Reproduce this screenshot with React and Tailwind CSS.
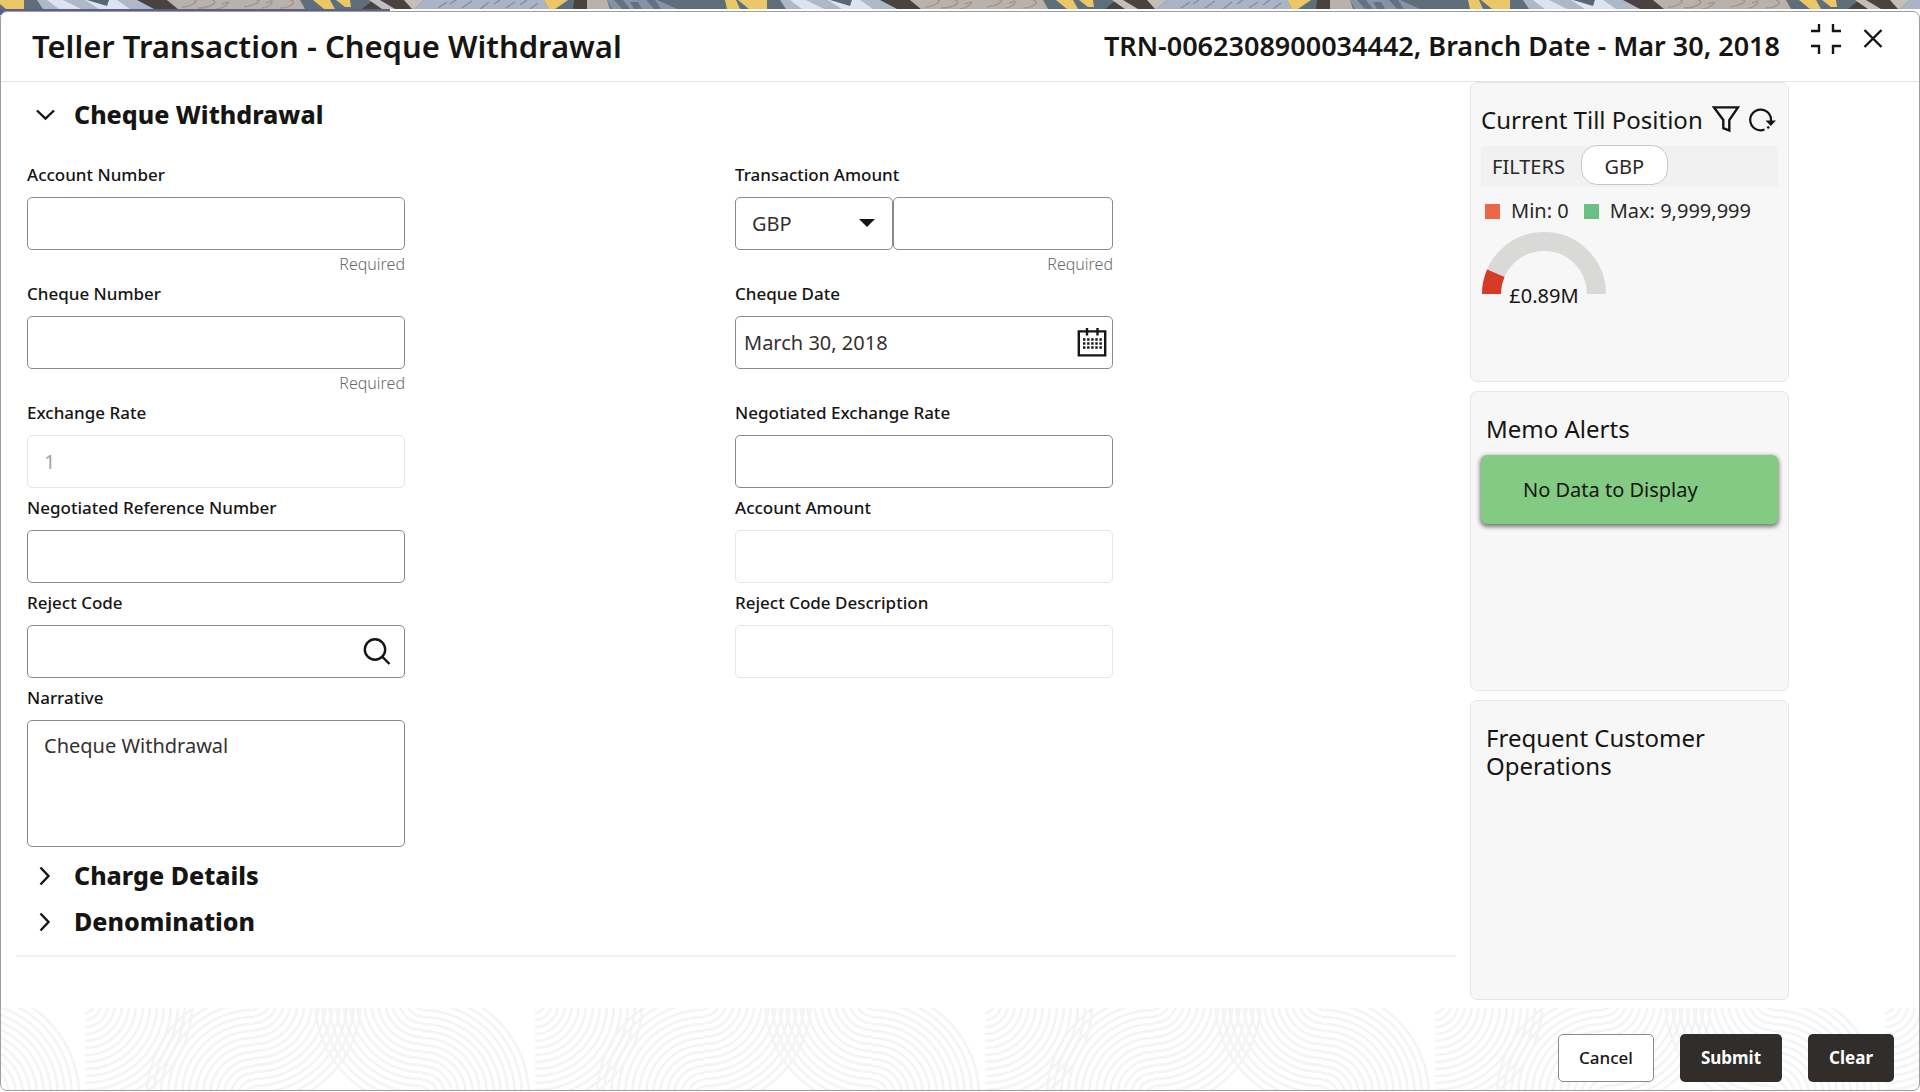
import React, { useId, useState } from 'react';

const cx = (...names) => names.filter(Boolean).join(' ');

/* ---------- decoration ---------- */

const BannerArt = () => (
  <svg className="block h-[9px] w-full" aria-hidden="true">
    <defs>
      <pattern id="banner" x="-18" y="0" width="743" height="9" patternUnits="userSpaceOnUse">
        <rect width="743" height="9" fill="#5f6f7a" />
        <path d="M0 0H11L15 9H2ZM13 0H42V9H24Z" fill="#ecc768" />
        <path d="M55 0H160L176 9H61Z" fill="#aeb8c7" />
        <path d="M65 0H81L99 9H77ZM103 0H135L148 9H117Z" fill="#dce3f1" />
        <path d="M105 0H127L125 6Z" fill="#566874" />
        <path d="M155 0H185L196 9H172Z" fill="#484240" />
        <path d="M185 0H318L323 9H196Z" fill="#b9b1ab" />
        <path
          d="M200 7c10 0 18-7 12-7M216 8c12 0 22-6 14-8M240 4c14-6 2 5-6 5M262 7c10-1 20-7 12-7M284 3c12-6 4 5-4 5M298 8c10 0 18-6 10-8"
          fill="none"
          stroke="#a0988f"
          strokeWidth="1.5"
        />
        <path d="M331 0H348L353 9H342ZM354 0H368L369 7H363Z" fill="#ecc768" />
        <path d="M391 0H424L433 9H380Z" fill="#484240" />
        <path d="M387 0H398L413 9H400ZM422 0H442L432 9H430Z" fill="#c3beba" />
        <path d="M442 0H562L567 9H432Z" fill="#aab4c4" />
        <path
          d="M456 8l9-6M468 4l6-4M480 8l10-7M498 9l9-7M512 4l6-4M524 8l9-6M538 5l7-5M548 9l8-6"
          stroke="#8090a2"
          strokeWidth="1.5"
        />
        <path d="M562 0H586L573 9H567Z" fill="#ecc768" />
        <path d="M592 0H605V9H591Z" fill="#484240" />
        <path d="M605 0H625L628 9H605Z" fill="#b9b1ab" />
        <path d="M625 0H675L695 9H630Z" fill="#8792a7" />
        <path d="M632 0h9l7 9h-8ZM648 2h8l4 7h-8ZM664 0h9l6 9h-7Z" fill="#63727f" />
      </pattern>
    </defs>
    <rect width="100%" height="9" fill="url(#banner)" />
  </svg>
);

const ringSteps = [2, 9, 16, 23, 30, 37, 44, 51, 58, 65, 72, 79, 86, 93, 100, 107];

const Rings = ({ x, y, clip }) => (
  <g clipPath={`url(#${clip})`}>
    {ringSteps.map((r) => (
      <circle key={r} cx={x} cy={y} r={r} />
    ))}
  </g>
);

const FooterArt = () => (
  <svg className="pointer-events-none absolute inset-0 h-full w-full" aria-hidden="true">
    <defs>
      <clipPath id="artA"><rect x="0" y="0" width="169" height="90" /></clipPath>
      <clipPath id="artB"><rect x="169" y="0" width="168" height="90" /></clipPath>
      <clipPath id="artC"><rect x="337" y="0" width="113" height="90" /></clipPath>
      <pattern id="footerArt" x="84" y="0" width="450" height="90" patternUnits="userSpaceOnUse">
        <g fill="none" stroke="#f4f4f4" strokeWidth="2.6">
          <Rings x={0} y={-4} clip="artA" />
          <Rings x={169} y={88} clip="artA" />
          <Rings x={169} y={-8} clip="artB" />
          <Rings x={337} y={-8} clip="artB" />
          <Rings x={337} y={88} clip="artC" />
        </g>
      </pattern>
    </defs>
    <rect width="100%" height="100%" fill="url(#footerArt)" />
  </svg>
);

/* ---------- icons ---------- */

const Chevron = ({ open }) => (
  <svg className="h-5 w-5" viewBox="0 0 20 20" fill="none" stroke="currentColor" strokeWidth="2.4" aria-hidden="true">
    <path d={open ? 'M2 5.5L10.5 13.5L19 5.5' : 'M5.5 1.5L13.5 10L5.5 18.5'} />
  </svg>
);

const CollapseIcon = () => (
  <svg className="h-[30px] w-[30px]" viewBox="0 0 30 30" fill="none" stroke="currentColor" strokeWidth="2.4" aria-hidden="true">
    <path d="M0 7H8V0M22 0V7H30M0 22H8V30M22 30V22H30" />
  </svg>
);

const CloseIcon = () => (
  <svg className="h-5 w-5" viewBox="0 0 20 20" fill="none" stroke="currentColor" strokeWidth="2.4" aria-hidden="true">
    <path d="M1.5 1L18.5 18M18.5 1L1.5 18" />
  </svg>
);

const FunnelIcon = () => (
  <svg className="h-7 w-7" viewBox="0 0 28 28" fill="none" stroke="currentColor" strokeWidth="2.4" aria-hidden="true">
    <path d="M2 1.4H26L17.3 14V24.6L11.3 22.2V14Z" />
  </svg>
);

const RefreshIcon = () => (
  <svg className="h-7 w-7" viewBox="0 0 28 28" fill="none" stroke="currentColor" strokeWidth="2.2" aria-hidden="true">
    <path d="M16.5 23.6A10.4 10.4 0 1 1 22.9 15.5" />
    <path d="M17.6 14.6H28L22.8 20Z" fill="currentColor" stroke="none" />
    <path d="M19.4 22.2L21 20.6" />
  </svg>
);

const SearchIcon = () => (
  <svg className="h-7 w-7" viewBox="0 0 28 28" fill="none" stroke="currentColor" strokeWidth="2.4" aria-hidden="true">
    <circle cx="12" cy="11.5" r="10.2" />
    <path d="M19.2 18.7L26.5 26" />
  </svg>
);

const CalendarIcon = () => (
  <svg className="h-[30px] w-[30px]" viewBox="0 0 30 30" aria-hidden="true">
    <path d="M1.8 3.4H28.2V27.4H1.8ZM10 0V7.5M20.5 0V7.5" fill="none" stroke="currentColor" strokeWidth="2.4" />
    {[11.5, 15.5, 19.5].map((y) => (
      <path key={y} d={`M6 ${y}H25`} stroke="currentColor" strokeWidth="2.4" strokeDasharray="2.4 1.7" />
    ))}
  </svg>
);

/* ---------- form pieces ---------- */

const boxClass =
  'block h-[53px] w-full rounded-[5px] border border-[#8b8a88] bg-white text-[20px] text-[#33312f] outline-none focus:border-[#161513] disabled:border-[#e6e6e5] disabled:text-[#a5a4a2]';

const Field = ({ label, required, reserve, children }) => {
  const id = useId();
  return (
    <div className={cx('w-full max-w-[378px]', required || reserve ? 'min-h-[119px]' : 'min-h-[95px]')}>
      <label htmlFor={id} className="mb-[10px] block text-[17px] leading-6 font-medium">
        {label}
      </label>
      {children(id)}
      {required && <p className="mt-[2px] text-right text-[16px] leading-6 font-light text-[#6b6967]">Required</p>}
    </div>
  );
};

const TextField = ({ label, required, reserve, icon, iconLabel, padding = 'px-4', ...rest }) => (
  <Field label={label} required={required} reserve={reserve}>
    {(id) => (
      <div className="relative">
        <input id={id} type="text" className={cx(boxClass, padding)} {...rest} />
        {icon && (
          <button type="button" aria-label={iconLabel} className="absolute inset-y-0 right-0 flex items-center pr-[6px]">
            {icon}
          </button>
        )}
      </div>
    )}
  </Field>
);

const SectionHeading = ({ title, open }) => (
  <h2>
    <button type="button" aria-expanded={open} className="flex h-[46px] items-center gap-[19px] pl-2 text-[25px] font-extrabold">
      <Chevron open={open} />
      {title}
    </button>
  </h2>
);

/* ---------- side widgets ---------- */

const Card = ({ children }) => (
  <section className="min-h-[300px] rounded-[7px] border border-[#e6e6e6] bg-[#f7f7f7] px-[10px] pt-[23px]">{children}</section>
);

const cardTitle = 'text-[24px] leading-7 font-normal';

const Gauge = ({ value, share }) => {
  const angle = Math.PI * (1 - share);
  const arcX = 63 + 52.5 * Math.cos(angle);
  const arcY = 62 - 52.5 * Math.sin(angle);
  return (
    <svg className="mt-[6px] h-[78px] w-[126px]" viewBox="0 0 126 78" role="img" aria-label={`Till position ${value}`}>
      <path d="M10.5 62A52.5 52.5 0 0 1 115.5 62" fill="none" stroke="#d9d9d7" strokeWidth="19" />
      <path d={`M10.5 62A52.5 52.5 0 0 1 ${arcX} ${arcY}`} fill="none" stroke="#d63b25" strokeWidth="19" />
      <text x="63" y="71" textAnchor="middle" fontSize="20" fill="#161513">
        {value}
      </text>
    </svg>
  );
};

const TillPosition = () => (
  <Card>
    <div className="flex items-center justify-between pr-[2px]">
      <h3 className={cardTitle}>Current Till Position</h3>
      <div className="flex gap-2">
        <button type="button" aria-label="Filter"><FunnelIcon /></button>
        <button type="button" aria-label="Refresh"><RefreshIcon /></button>
      </div>
    </div>
    <div className="mt-3 flex h-[41px] items-center gap-4 bg-[#f1f1f1] pl-[11px] text-[20px] text-[#2a2826]">
      <span>FILTERS</span>
      <button type="button" className="mb-1 h-10 w-[87px] rounded-[16px] border border-[#c9c8c7] bg-white pt-1">
        GBP
      </button>
    </div>
    <div className="mt-[9px] flex h-[30px] items-center gap-[11px] pl-1 text-[20px] text-[#2a2826]">
      <span className="h-[15px] w-[15px] bg-[#ed6647]" />
      <span className="mr-1">Min: 0</span>
      <span className="h-[15px] w-[15px] bg-[#68c182]" />
      <span>Max: 9,999,999</span>
    </div>
    <Gauge value="£0.89M" share={0.13} />
  </Card>
);

const App = () => {
  const [currency, setCurrency] = useState('GBP');
  const [amount, setAmount] = useState('');

  return (
    <div className="flex min-h-screen flex-col bg-white font-['Noto_Sans',sans-serif] text-[#161513]">
      <BannerArt />
      <div className="h-[2px]">
        <div className="h-[6px] w-[20.3%] bg-[#5a5f8f]" />
      </div>

      <div className="relative mb-px flex flex-1 flex-col overflow-hidden rounded-[7px] border border-[#9e9d9c] bg-white">
        <header className="flex h-[70px] items-center justify-between border-b border-[#e4e4e3] pr-9 pl-[31px]">
          <h1 className="text-[31px] font-semibold">Teller Transaction - Cheque Withdrawal</h1>
          <div className="flex h-full items-center">
            <p className="text-[27px] font-semibold">TRN-0062308900034442, Branch Date - Mar 30, 2018</p>
            <div className="mb-4 ml-[31px] flex items-center gap-[22px]">
              <button type="button" aria-label="Collapse"><CollapseIcon /></button>
              <button type="button" aria-label="Close"><CloseIcon /></button>
            </div>
          </div>
        </header>

        <div className="flex flex-1">
          <main className="ml-[15px] flex-1">
            <form className="border-b-2 border-[#f1f1f1] pt-[10px] pr-[13px] pb-[10px] pl-[11px]">
              <SectionHeading title="Cheque Withdrawal" open />
              <div className="mt-[25px] grid grid-cols-2">
                <TextField label="Account Number" required />
                <Field label="Transaction Amount" required>
                  {(id) => (
                    <div className="flex">
                      <div className="relative w-[158px] shrink-0">
                        <select
                          aria-label="Currency"
                          className={cx(boxClass, 'appearance-none px-4')}
                          value={currency}
                          onChange={(e) => setCurrency(e.target.value)}
                        >
                          <option>GBP</option>
                          <option>USD</option>
                          <option>EUR</option>
                        </select>
                        <svg className="pointer-events-none absolute top-[22px] right-[18px] h-2 w-4" viewBox="0 0 16 8" aria-hidden="true">
                          <path d="M0 0H16L8 8Z" fill="#161513" />
                        </svg>
                      </div>
                      <input
                        id={id}
                        type="text"
                        className={cx(boxClass, 'min-w-0 px-4')}
                        value={amount}
                        onChange={(e) => setAmount(e.target.value)}
                      />
                    </div>
                  )}
                </Field>

                <TextField label="Cheque Number" required />
                <TextField
                  label="Cheque Date"
                  reserve
                  defaultValue="March 30, 2018"
                  padding="px-2"
                  icon={<CalendarIcon />}
                  iconLabel="Pick a date"
                />

                <TextField label="Exchange Rate" defaultValue="1" disabled />
                <TextField label="Negotiated Exchange Rate" />

                <TextField label="Negotiated Reference Number" />
                <TextField label="Account Amount" disabled />

                <TextField label="Reject Code" icon={<span className="pr-2"><SearchIcon /></span>} iconLabel="Search reject code" />
                <TextField label="Reject Code Description" disabled />

                <Field label="Narrative">
                  {(id) => (
                    <textarea id={id} className={cx(boxClass, 'h-[127px] resize-none px-4 py-[11px] leading-7')} defaultValue="Cheque Withdrawal" />
                  )}
                </Field>
              </div>
              <div className="mt-[6px]">
                <SectionHeading title="Charge Details" open={false} />
                <SectionHeading title="Denomination" open={false} />
              </div>
            </form>
          </main>

          <aside className="mr-[130px] ml-[14px] flex w-[319px] shrink-0 flex-col gap-[9px]">
            <TillPosition />
            <Card>
              <h3 className={cx(cardTitle, 'pl-[5px]')}>Memo Alerts</h3>
              <p className="mt-3 flex h-[69px] items-center rounded-[6px] bg-[#83cb83] pl-[42px] text-[20px] shadow-[0_2px_4px_1px_rgba(0,0,0,0.5)]">
                No Data to Display
              </p>
            </Card>
            <Card>
              <h3 className={cx(cardTitle, 'pl-[5px]')}>
                Frequent Customer
                <br />
                Operations
              </h3>
            </Card>
          </aside>
        </div>

        <footer className="relative mt-2 h-[82px]">
          <FooterArt />
          <div className="relative flex h-full items-center justify-end gap-[26px] pt-[18px] pr-[25px] text-[17px]">
            <button type="button" className="h-12 rounded-[5px] border border-[#8b8a88] bg-white px-5 font-medium">Cancel</button>
            <button type="button" className="h-12 rounded-[5px] bg-[#312d2a] px-[21px] font-bold text-white">Submit</button>
            <button type="button" className="h-12 rounded-[5px] bg-[#312d2a] px-[21px] font-bold text-white">Clear</button>
          </div>
        </footer>
      </div>
    </div>
  );
};

export default App;
